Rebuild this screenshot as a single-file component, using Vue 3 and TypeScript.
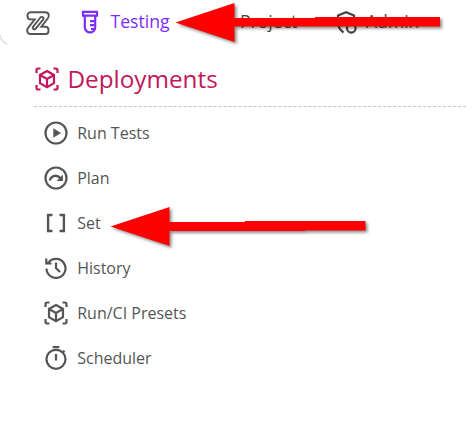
<script setup lang="ts">
type IconName = 'play' | 'plan' | 'set' | 'history' | 'cube' | 'timer'

interface MenuItem {
  label: string
  icon: IconName
}

const items: MenuItem[] = [
  { label: 'Run Tests', icon: 'play' },
  { label: 'Plan', icon: 'plan' },
  { label: 'Set', icon: 'set' },
  { label: 'History', icon: 'history' },
  { label: 'Run/CI Presets', icon: 'cube' },
  { label: 'Scheduler', icon: 'timer' },
]
</script>

<template>
  <div class="page">
    <nav class="nav">
      <svg class="corner" viewBox="0 0 10 12">
        <path d="M-1 0C0 5 2.500 9 7 11.500" />
      </svg>
      <svg class="logo" viewBox="0 0 26 26">
        <path d="M5.500 2.200H20.500C24 2.200 24.600 6 22.900 8.300L16.300 16.800H20.500C24.600 16.800 24.600 24 20.500 24H5.500C2 24 1.400 20.200 3.100 17.900L9.700 9.400H5.500C1.400 9.400 1.400 2.200 5.500 2.200Z" />
        <rect x="11.400" y="5.600" width="3.400" height="15" rx="1.700" transform="rotate(39 13.100 13.100)" />
      </svg>
      <a class="tab active">
        <svg class="tube" viewBox="0 0 18 24">
          <path d="M2 1.800H16V5.600H2Z M3.800 6V17.200A5.200 5.200 0 0 0 14.200 17.200V6 M9 11.200H13 M9 15.200H13 M10 19H13" />
        </svg>
        <span>Testing</span>
      </a>
      <a class="tab project"><span>Project</span></a>
      <a class="tab admin">
        <svg class="shield" viewBox="0 0 24 26">
          <path d="M8.500 22.500C5 20 3 16.500 3 12.500V5.500L11 2.200L19 5.500V12" />
          <circle cx="16.300" cy="18.300" r="4.300" />
        </svg>
        <span>Admin</span>
      </a>
    </nav>

    <section class="panel">
      <h2 class="heading">
        <svg class="icon" viewBox="0 0 24 24">
          <path d="M1.500 6V3.200Q1.500 1.500 3.200 1.500H5.500M18.500 1.500H20.800Q22.500 1.500 22.500 3.200V6M22.500 18V20.800Q22.500 22.500 20.800 22.500H18.500M5.500 22.500H3.200Q1.500 22.500 1.500 20.800V18" />
          <path d="M12 4L19 8V16.200L12 20.200L5 16.200V8ZM5 8L12 12L19 8M12 12V20.200" />
        </svg>
        <span>Deployments</span>
      </h2>
      <ul class="menu">
        <li v-for="item in items" :key="item.label">
          <svg class="icon" viewBox="0 0 24 24">
            <template v-if="item.icon === 'play'">
              <circle cx="12" cy="12" r="10.500" />
              <path class="solid" d="M9.300 7.200L17 12L9.300 16.800Z" />
            </template>
            <template v-else-if="item.icon === 'plan'">
              <circle cx="12" cy="12" r="10.500" />
              <path class="bold" d="M5.800 14.500C7.500 8.800 13.500 8.500 16.300 12.300" />
              <path class="solid" d="M18.900 8.600V14.900H12.700Z" />
            </template>
            <path v-else-if="item.icon === 'set'" class="bold" d="M8.500 4H4.100V20H8.500M15.500 4H19.900V20H15.500" />
            <template v-else-if="item.icon === 'history'">
              <path d="M2.500 12.500A9.500 9.500 0 1 0 4.500 6.600L3.100 8M2.300 2.500V7.500H7.500M12 6.500V12L16 16" />
            </template>
            <template v-else-if="item.icon === 'cube'">
              <path d="M1.500 6V3.200Q1.500 1.500 3.200 1.500H5.500M18.500 1.500H20.800Q22.500 1.500 22.500 3.200V6M22.500 18V20.800Q22.500 22.500 20.800 22.500H18.500M5.500 22.500H3.200Q1.500 22.500 1.500 20.800V18" />
              <path d="M12 4L19 8V16.200L12 20.200L5 16.200V8ZM5 8L12 12L19 8M12 12V20.200" />
            </template>
            <template v-else>
              <circle cx="12" cy="13.300" r="9.500" />
              <path d="M8.700 1.200H15.300M12 8V14.500M18.200 7L20.500 4.800" />
            </template>
          </svg>
          <span>{{ item.label }}</span>
        </li>
      </ul>
    </section>

    <svg class="arrows" viewBox="0 0 476 422">
      <path d="M175.500 22.500L234.500 3V18H315V17H440V26.500H234.500V42Z" />
      <path d="M110.500 226.500L169.500 207V222H245V221H365.500V230.500H305V231H169.500V246Z" />
    </svg>
  </div>
</template>

<style>
body {
  margin: 0;
  background: #fff;
}
</style>

<style scoped>
.page {
  position: relative;
  width: 476px;
  height: 422px;
  overflow: hidden;
  font-family: "Open Sans", sans-serif;
  color: #555;
  background: #fff;
}
svg {
  display: block;
  flex: none;
  fill: none;
  stroke: currentColor;
  stroke-width: 2.200;
}
.nav {
  display: flex;
  align-items: center;
  height: 44px;
  padding-left: 25px;
  box-sizing: border-box;
}
.corner {
  position: absolute;
  left: 0;
  top: 33px;
  width: 10px;
  height: 12px;
  color: #ddd;
  stroke-width: 1.500;
}
.logo {
  width: 26px;
  height: 26px;
  margin-top: 2px;
  stroke-width: 1.900;
}
.tab {
  display: flex;
  align-items: center;
  font-size: 17.6px;
  line-height: 24px;
  color: #444;
}
.tab span {
  margin-top: -2px;
}
.active {
  margin-left: 30px;
  width: 159px;
  color: #7d2cff;
}
.tube {
  width: 18px;
  height: 24px;
  margin-right: 11.500px;
}
.project {
  width: 95px;
}
.shield {
  width: 24px;
  height: 26px;
  margin-right: 7px;
  margin-top: 1px;
}
.panel {
  padding: 16px 10px 0 34px;
}
.heading {
  display: flex;
  align-items: center;
  gap: 8px;
  height: 47px;
  margin: 0;
  padding: 0 0 0 1.400px;
  border-bottom: 1px dashed #c4c4c4;
  box-sizing: border-box;
  font-size: 24.300px;
  font-weight: 400;
  color: #c2185b;
}
.heading .icon {
  position: relative;
  top: -4px;
}
.heading span {
  position: relative;
  top: -5px;
}
.menu {
  display: grid;
  grid-auto-rows: 45px;
  margin: 3px 0 0;
  padding: 0 0 0 10.400px;
  list-style: none;
  font-size: 16px;
}
.menu li {
  display: flex;
  align-items: center;
  gap: 8.800px;
}
.icon {
  width: 24px;
  height: 24px;
}
.menu .icon {
  position: relative;
  top: 0.500px;
}
.solid {
  fill: currentColor;
  stroke: none;
}
.bold {
  stroke-width: 2.400;
}
.arrows {
  position: absolute;
  left: 0;
  top: 0;
  width: 476px;
  height: 422px;
  fill: #f00;
  stroke: none;
  filter: drop-shadow(2px 2px 1.500px rgba(0, 0, 0, 0.45));
}
</style>
